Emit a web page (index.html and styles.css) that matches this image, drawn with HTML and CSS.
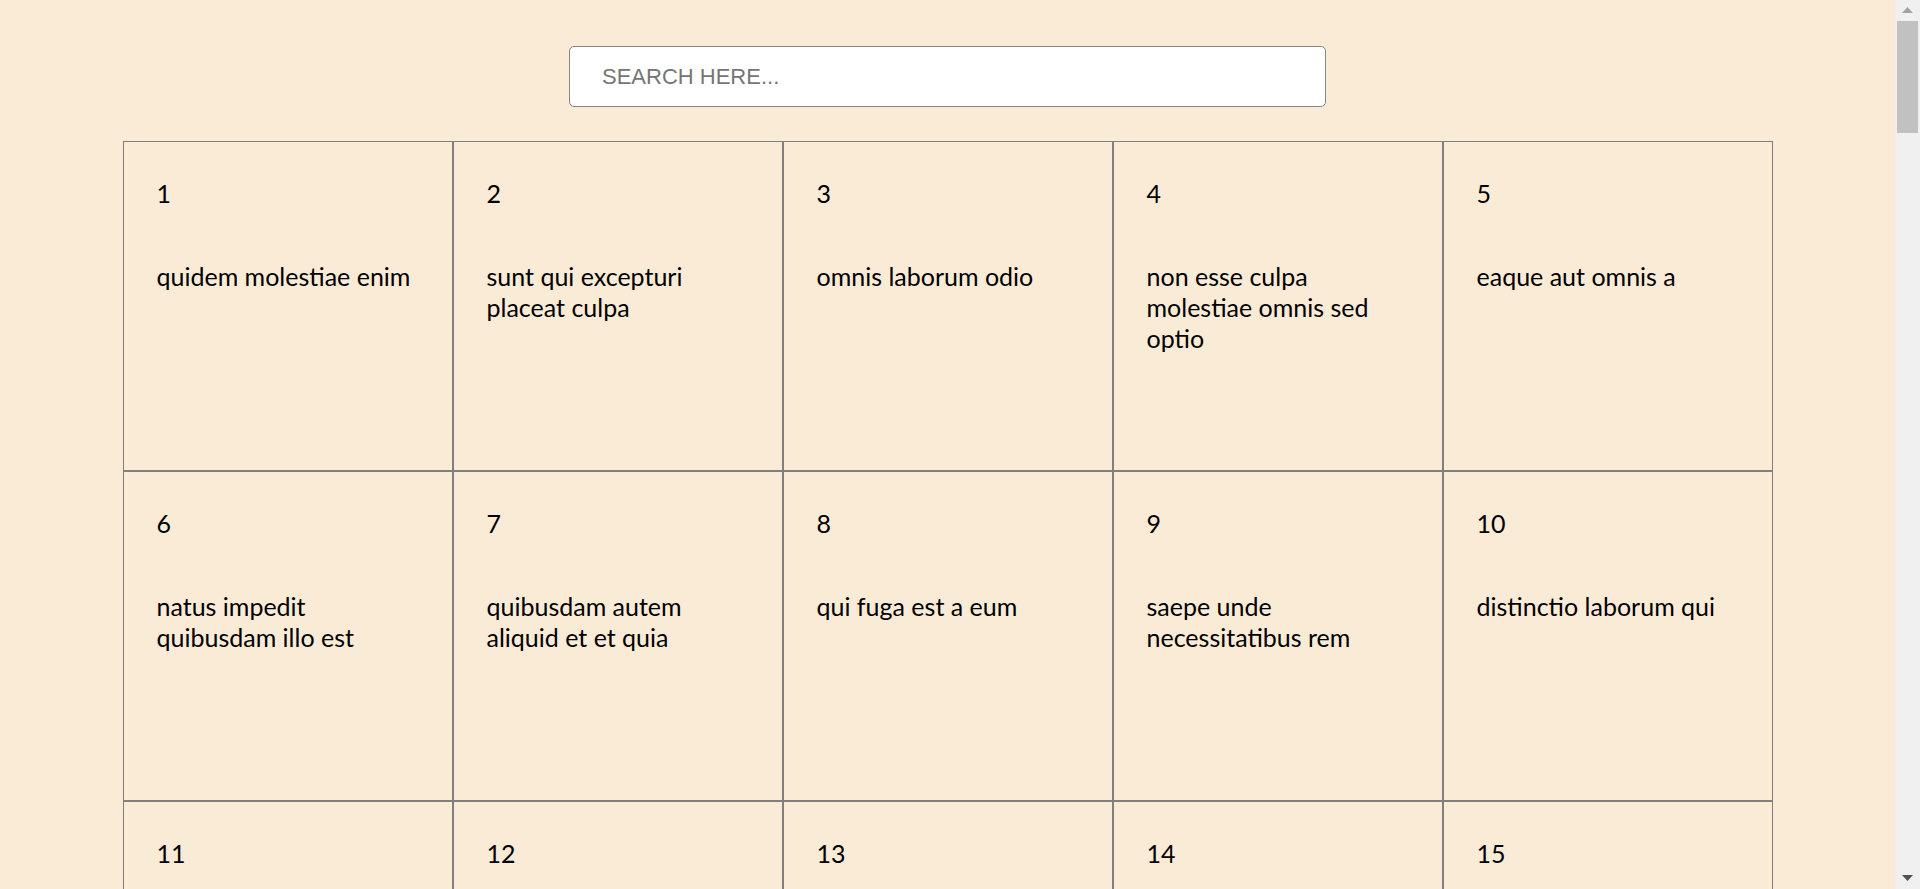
FILE: index.html
```html
<!DOCTYPE html>
<html lang="en">
<head>
<meta charset="utf-8">
<title>Albums</title>
<link rel="stylesheet" href="styles.css">
</head>
<body>
<main class="page">
  <div class="search-wrap">
    <input class="search" type="text" placeholder="SEARCH HERE...">
  </div>
  <div class="grid">
    <div class="card"><p class="card-id">1</p><p class="card-title">quidem molestiae enim</p></div>
    <div class="card"><p class="card-id">2</p><p class="card-title">sunt qui excepturi placeat culpa</p></div>
    <div class="card"><p class="card-id">3</p><p class="card-title">omnis laborum odio</p></div>
    <div class="card"><p class="card-id">4</p><p class="card-title">non esse culpa molestiae omnis sed optio</p></div>
    <div class="card"><p class="card-id">5</p><p class="card-title">eaque aut omnis a</p></div>
    <div class="card"><p class="card-id">6</p><p class="card-title">natus impedit quibusdam illo est</p></div>
    <div class="card"><p class="card-id">7</p><p class="card-title">quibusdam autem aliquid et et quia</p></div>
    <div class="card"><p class="card-id">8</p><p class="card-title">qui fuga est a eum</p></div>
    <div class="card"><p class="card-id">9</p><p class="card-title">saepe unde necessitatibus rem</p></div>
    <div class="card"><p class="card-id">10</p><p class="card-title">distinctio laborum qui</p></div>
    <div class="card"><p class="card-id">11</p><p class="card-title">quam nostrum impedit mollitia quod et dolor</p></div>
    <div class="card"><p class="card-id">12</p><p class="card-title">consequatur autem doloribus natus consectetur</p></div>
    <div class="card"><p class="card-id">13</p><p class="card-title">ab rerum non rerum consequatur ut ea unde</p></div>
    <div class="card"><p class="card-id">14</p><p class="card-title">ducimus molestias eos animi atque nihil</p></div>
    <div class="card"><p class="card-id">15</p><p class="card-title">ut pariatur rerum ipsum natus repellendus praesentium</p></div>
    <div class="card"><p class="card-id">16</p><p class="card-title">voluptatem aut maxime inventore autem magnam atque repellat</p></div>
    <div class="card"><p class="card-id">17</p><p class="card-title">aut minima voluptatem ut velit</p></div>
    <div class="card"><p class="card-id">18</p><p class="card-title">nesciunt quia et doloremque</p></div>
    <div class="card"><p class="card-id">19</p><p class="card-title">velit pariatur quaerat similique libero omnis quia</p></div>
    <div class="card"><p class="card-id">20</p><p class="card-title">voluptas rerum iure ut enim</p></div>
    <div class="card"><p class="card-id">21</p><p class="card-title">repudiandae voluptatem optio est consequatur rem in temporibus et</p></div>
    <div class="card"><p class="card-id">22</p><p class="card-title">et rem non provident vel ut</p></div>
    <div class="card"><p class="card-id">23</p><p class="card-title">incidunt quisquam hic adipisci sequi</p></div>
    <div class="card"><p class="card-id">24</p><p class="card-title">dolores ut et facere placeat</p></div>
    <div class="card"><p class="card-id">25</p><p class="card-title">vero maxime id possimus sunt neque et consequatur</p></div>
    <div class="card"><p class="card-id">26</p><p class="card-title">quibusdam saepe ipsa vel harum</p></div>
    <div class="card"><p class="card-id">27</p><p class="card-title">id non nostrum expedita</p></div>
    <div class="card"><p class="card-id">28</p><p class="card-title">omnis neque exercitationem sed dolor atque maxime aut cum</p></div>
    <div class="card"><p class="card-id">29</p><p class="card-title">inventore ut quasi magnam itaque est fugit</p></div>
    <div class="card"><p class="card-id">30</p><p class="card-title">tempora assumenda et similique odit distinctio error</p></div>
    <div class="card"><p class="card-id">31</p><p class="card-title">adipisci laborum fuga laboriosam</p></div>
    <div class="card"><p class="card-id">32</p><p class="card-title">reiciendis dolores a ut qui debitis non quo labore</p></div>
    <div class="card"><p class="card-id">33</p><p class="card-title">iste eos nostrum</p></div>
    <div class="card"><p class="card-id">34</p><p class="card-title">cumque voluptatibus rerum architecto blanditiis</p></div>
    <div class="card"><p class="card-id">35</p><p class="card-title">et impedit nisi quae magni necessitatibus sed aut pariatur</p></div>
    <div class="card"><p class="card-id">36</p><p class="card-title">nihil cupiditate voluptate neque</p></div>
    <div class="card"><p class="card-id">37</p><p class="card-title">est placeat dicta ut nisi rerum iste</p></div>
    <div class="card"><p class="card-id">38</p><p class="card-title">unde a sequi id</p></div>
    <div class="card"><p class="card-id">39</p><p class="card-title">ratione porro illum labore eum aperiam sed</p></div>
    <div class="card"><p class="card-id">40</p><p class="card-title">voluptas neque et sint aut quo odit</p></div>
    <div class="card"><p class="card-id">41</p><p class="card-title">ea voluptates maiores eos accusantium officiis tempore mollitia consequatur</p></div>
    <div class="card"><p class="card-id">42</p><p class="card-title">tenetur explicabo ea</p></div>
    <div class="card"><p class="card-id">43</p><p class="card-title">aperiam doloremque nihil</p></div>
    <div class="card"><p class="card-id">44</p><p class="card-title">sapiente cum numquam officia consequatur vel natus quos suscipit</p></div>
    <div class="card"><p class="card-id">45</p><p class="card-title">tenetur quos ea unde est enim corrupti qui</p></div>
    <div class="card"><p class="card-id">46</p><p class="card-title">molestiae voluptate non</p></div>
    <div class="card"><p class="card-id">47</p><p class="card-title">temporibus molestiae aut</p></div>
    <div class="card"><p class="card-id">48</p><p class="card-title">modi consequatur culpa aut quam soluta alias perspiciatis laudantium</p></div>
    <div class="card"><p class="card-id">49</p><p class="card-title">ut aut vero repudiandae voluptas ullam voluptas at consequatur</p></div>
    <div class="card"><p class="card-id">50</p><p class="card-title">sed qui sed quas sit ducimus dolor</p></div>
    <div class="card"><p class="card-id">51</p><p class="card-title">odit laboriosam sint quia cupiditate animi quis</p></div>
    <div class="card"><p class="card-id">52</p><p class="card-title">necessitatibus quas et sunt at voluptatem</p></div>
    <div class="card"><p class="card-id">53</p><p class="card-title">est vel sequi voluptatem nemo quam molestiae modi enim</p></div>
    <div class="card"><p class="card-id">54</p><p class="card-title">aut non illo amet perferendis</p></div>
    <div class="card"><p class="card-id">55</p><p class="card-title">qui culpa itaque omnis in nesciunt architecto error</p></div>
    <div class="card"><p class="card-id">56</p><p class="card-title">omnis qui maiores tempora officiis omnis rerum sed repellat</p></div>
    <div class="card"><p class="card-id">57</p><p class="card-title">libero excepturi voluptatem est architecto quae voluptatum officia tempora</p></div>
    <div class="card"><p class="card-id">58</p><p class="card-title">nulla illo consequatur aspernatur veritatis aut error delectus et</p></div>
    <div class="card"><p class="card-id">59</p><p class="card-title">eligendi similique provident nihil</p></div>
    <div class="card"><p class="card-id">60</p><p class="card-title">omnis mollitia sunt aliquid eum consequatur fugit minus laudantium</p></div>
    <div class="card"><p class="card-id">61</p><p class="card-title">delectus iusto et</p></div>
    <div class="card"><p class="card-id">62</p><p class="card-title">eos ea non recusandae iste ut quasi</p></div>
    <div class="card"><p class="card-id">63</p><p class="card-title">velit est quam</p></div>
    <div class="card"><p class="card-id">64</p><p class="card-title">autem voluptatem amet iure quae</p></div>
    <div class="card"><p class="card-id">65</p><p class="card-title">voluptates delectus iure iste qui</p></div>
    <div class="card"><p class="card-id">66</p><p class="card-title">velit sed quia dolor dolores delectus</p></div>
    <div class="card"><p class="card-id">67</p><p class="card-title">ad voluptas nostrum et nihil</p></div>
    <div class="card"><p class="card-id">68</p><p class="card-title">qui quasi nihil aut voluptatum sit dolore minima</p></div>
    <div class="card"><p class="card-id">69</p><p class="card-title">qui aut est</p></div>
    <div class="card"><p class="card-id">70</p><p class="card-title">et deleniti unde</p></div>
    <div class="card"><p class="card-id">71</p><p class="card-title">et vel corporis</p></div>
    <div class="card"><p class="card-id">72</p><p class="card-title">unde exercitationem ut</p></div>
    <div class="card"><p class="card-id">73</p><p class="card-title">quos omnis officia</p></div>
    <div class="card"><p class="card-id">74</p><p class="card-title">quia est eius vitae dolor</p></div>
    <div class="card"><p class="card-id">75</p><p class="card-title">aut quia expedita non</p></div>
    <div class="card"><p class="card-id">76</p><p class="card-title">dolorem magnam facere itaque ut reprehenderit tenetur corrupti</p></div>
    <div class="card"><p class="card-id">77</p><p class="card-title">cupiditate sapiente maiores iusto ducimus cum excepturi veritatis quia</p></div>
    <div class="card"><p class="card-id">78</p><p class="card-title">est minima eius possimus ea ratione velit et</p></div>
    <div class="card"><p class="card-id">79</p><p class="card-title">ipsa quae voluptas natus ut suscipit soluta quia quidem</p></div>
    <div class="card"><p class="card-id">80</p><p class="card-title">id nihil reprehenderit</p></div>
    <div class="card"><p class="card-id">81</p><p class="card-title">quibusdam sapiente et</p></div>
    <div class="card"><p class="card-id">82</p><p class="card-title">recusandae consequatur vel amet unde</p></div>
    <div class="card"><p class="card-id">83</p><p class="card-title">aperiam odio fugiat</p></div>
    <div class="card"><p class="card-id">84</p><p class="card-title">est et at eos expedita</p></div>
    <div class="card"><p class="card-id">85</p><p class="card-title">qui voluptatem consequatur aut ab quis temporibus praesentium</p></div>
    <div class="card"><p class="card-id">86</p><p class="card-title">eligendi mollitia alias aspernatur vel ut iusto</p></div>
    <div class="card"><p class="card-id">87</p><p class="card-title">aut aut architecto</p></div>
    <div class="card"><p class="card-id">88</p><p class="card-title">quas perspiciatis optio</p></div>
    <div class="card"><p class="card-id">89</p><p class="card-title">sit optio id voluptatem est eum et</p></div>
    <div class="card"><p class="card-id">90</p><p class="card-title">est vel dignissimos</p></div>
    <div class="card"><p class="card-id">91</p><p class="card-title">repellendus praesentium debitis officiis</p></div>
    <div class="card"><p class="card-id">92</p><p class="card-title">incidunt et et eligendi assumenda soluta quia recusandae</p></div>
    <div class="card"><p class="card-id">93</p><p class="card-title">nisi qui dolores perspiciatis</p></div>
    <div class="card"><p class="card-id">94</p><p class="card-title">quisquam a dolores et earum vitae</p></div>
    <div class="card"><p class="card-id">95</p><p class="card-title">consectetur vel rerum qui aperiam modi eos aspernatur ipsa</p></div>
    <div class="card"><p class="card-id">96</p><p class="card-title">unde et ut molestiae est molestias voluptatem sint</p></div>
    <div class="card"><p class="card-id">97</p><p class="card-title">est quod aut</p></div>
    <div class="card"><p class="card-id">98</p><p class="card-title">omnis quia possimus nesciunt deleniti assumenda sed autem</p></div>
    <div class="card"><p class="card-id">99</p><p class="card-title">consectetur ut id impedit dolores sit ad ex aut</p></div>
    <div class="card"><p class="card-id">100</p><p class="card-title">enim repellat iste</p></div>
  </div>
</main>
<aside class="scrollbar" aria-hidden="true">
  <svg class="scroll-arrow" width="11" height="6" viewBox="0 0 11 6"><path d="M0 6 L5.5 0 L11 6 Z" fill="#a3a3a3"/></svg>
  <div class="scroll-track"><div class="scroll-thumb"></div></div>
  <svg class="scroll-arrow" width="11" height="6" viewBox="0 0 11 6"><path d="M0 0 L5.5 6 L11 0 Z" fill="#505050"/></svg>
</aside>
</body>
</html>
```

FILE: styles.css
```css
body {
  margin: 0 25px 0 0;
  background: #faebd7;
  font-family: Lato, "Open Sans", sans-serif;
  color: #000;
}

.page {
  padding: 46px 0 40px;
}

.search-wrap {
  display: flex;
  justify-content: center;
}

.search {
  width: 757px;
  height: 61px;
  box-sizing: border-box;
  border: 1px solid #858585;
  border-radius: 5px;
  background: #fff;
  padding: 0 32px;
  font-family: "Liberation Sans", Arial, sans-serif;
  font-size: 22px;
  color: #333;
  outline: none;
}

.search::placeholder {
  color: #757575;
}

.grid {
  display: grid;
  grid-template-columns: repeat(5, 330px);
  grid-auto-rows: 330px;
  justify-content: center;
  margin-top: 34px;
}

.card {
  box-sizing: border-box;
  border: 1px solid #808080;
  padding: 36px 32px 32px 33px;
  overflow: hidden;
}

.card-id,
.card-title {
  margin: 0;
  font-size: 25px;
  line-height: 31px;
}

.card-title {
  margin-top: 52px;
}

/* imitation of the browser's vertical scrollbar */
.scrollbar {
  position: fixed;
  top: 0;
  right: 0;
  width: 25px;
  height: 100vh;
  background: #f0f0f0;
  display: flex;
  flex-direction: column;
  align-items: center;
}

.scroll-arrow {
  flex: none;
  margin: 7px 0 8px;
}

.scroll-track {
  flex: 1;
  align-self: stretch;
  padding: 0 2px;
}

.scroll-thumb {
  height: 112px;
  background: #c1c1c1;
}
```
